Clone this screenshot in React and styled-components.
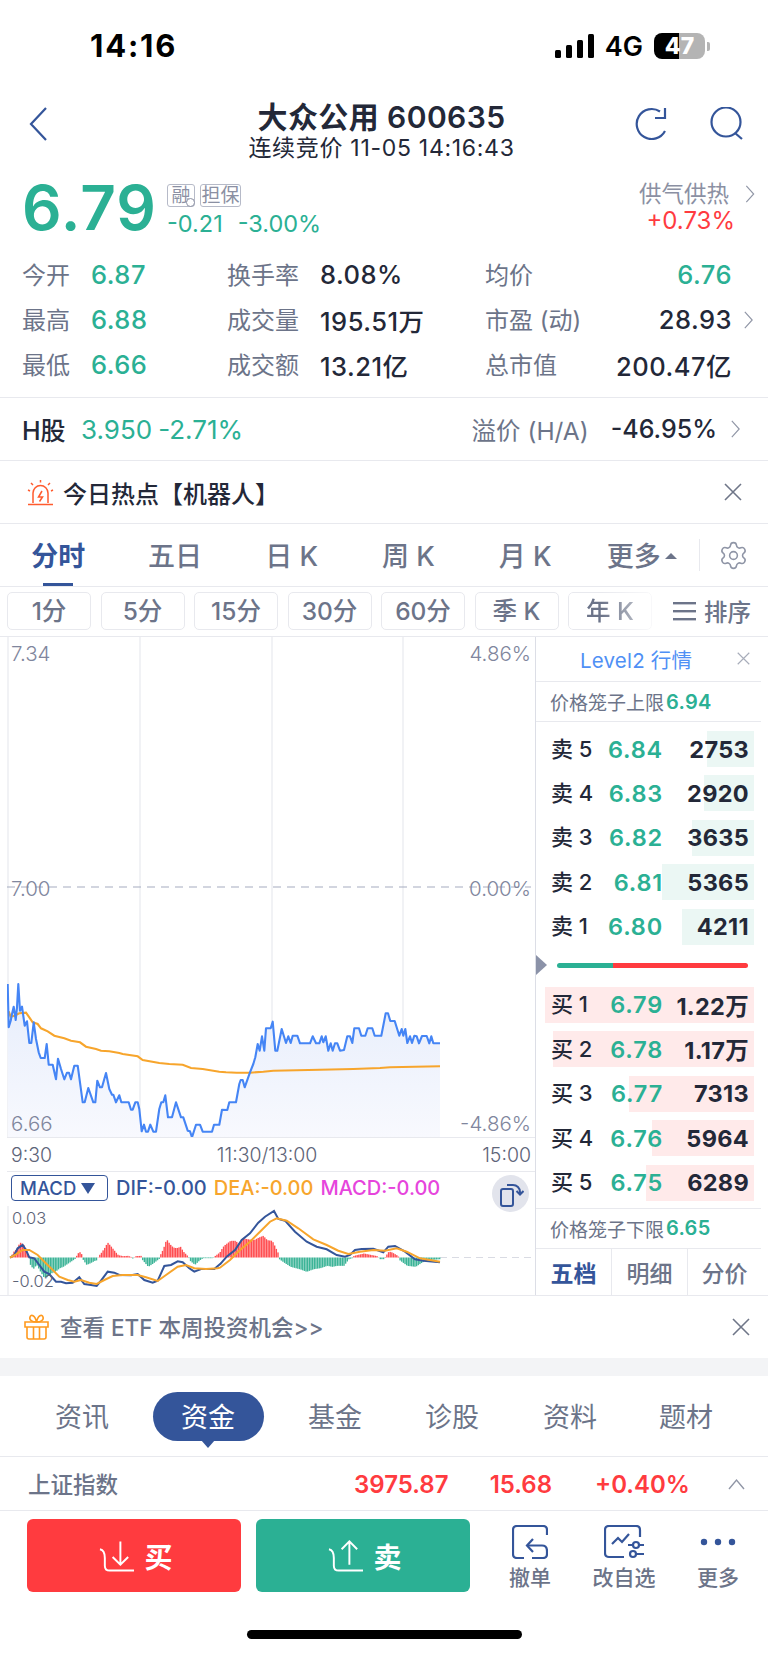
import React from 'react';
import styled, { createGlobalStyle } from 'styled-components';
import { Settings } from 'lucide-react';

const GREEN = '#2bb094';
const RED = '#ff3b3f';
const BLUE = '#34559a';
const DARK = '#232838';
const GRAY = '#6c7489';
const LINE = '#e8e9ee';

const GlobalStyle = createGlobalStyle`
  html, body {
    margin: 0;
    padding: 0;
    background: #fff;
    font-family: Inter, "Noto Sans CJK SC", sans-serif;
  }
  * { box-sizing: border-box; }
`;

// price line, in zoom pixels of the two crops
const left = ([x, y]) => [6 + x / 3, 975 + y / 3];
const right = ([x, y]) => [220 + x / 3, 975 + y / 3];
const macdLeft = ([x, y]) => [6 + x / 3, 1200 + y / 3];
const macdRight = ([x, y]) => [220 + x / 3, 1200 + y / 3];

const priceLine = [
  ...[[5,30],[8,160],[14,140],[18,120],[23,98],[29,138],[33,100],[37,30],[42,110],[48,98],[56,155],[63,142],[70,207],[76,207],[83,145],[90,195],[98,235],[104,252],[116,252],[122,210],[128,272],[140,272],[150,316],[156,254],[165,285],[175,316],[183,296],[189,296],[195,316],[205,275],[215,275],[230,385],[236,385],[247,342],[262,385],[268,385],[274,320],[282,340],[288,340],[300,297],[310,345],[318,362],[322,362],[330,385],[340,364],[346,385],[368,385],[375,407],[380,407],[388,385],[395,385],[400,405],[407,472],[414,452],[420,473],[426,473],[433,452],[442,473],[450,473],[460,405],[466,385],[472,385],[478,364],[486,430],[498,430],[510,385],[525,430],[532,430],[545,470],[552,472],[558,490],[570,452],[582,452],[590,473],[618,473],[624,452],[640,452],[648,407]].map(left),
  ...[[22,408],[28,385],[48,385],[58,330],[62,318],[68,318],[74,340],[90,295],[100,270],[106,250],[113,210],[119,230],[126,187],[133,230],[138,163],[152,163],[158,143],[166,230],[172,230],[185,165],[198,207],[205,187],[212,207],[218,185],[232,185],[240,208],[270,208],[278,187],[288,208],[298,208],[305,187],[310,205],[317,187],[325,230],[332,208],[338,230],[345,208],[352,208],[360,230],[372,228],[382,187],[390,187],[397,207],[403,163],[417,163],[424,185],[436,185],[443,163],[457,163],[464,185],[484,185],[497,118],[504,118],[511,141],[524,141],[538,185],[545,165],[550,185],[556,165],[562,207],[570,187],[576,207],[583,185],[590,187],[597,208],[606,186],[620,186],[628,208],[634,187],[640,208],[660,208]].map(right),
];

const avgLine = [
  ...[[8,112],[14,128],[25,125],[40,118],[60,116],[70,130],[80,145],[95,150],[105,163],[125,172],[145,185],[175,193],[195,200],[222,205],[240,218],[270,225],[285,230],[310,232],[340,237],[350,240],[395,247],[410,258],[460,267],[490,270],[530,272],[555,282],[590,285],[640,293]].map(left),
  ...[[18,295],[50,296],[90,296],[130,293],[160,290],[300,287],[400,285],[480,282],[510,280],[660,277]].map(right),
];

const difLine = [
  ...[[12,173],[25,165],[35,145],[50,135],[60,150],[70,172],[85,175],[100,195],[115,215],[130,222],[150,245],[165,245],[180,250],[200,248],[220,232],[235,252],[255,255],[272,258],[285,242],[305,215],[325,218],[340,225],[375,226],[395,222],[415,240],[440,248],[455,242],[475,198],[495,195],[515,184],[530,187],[550,205],[565,215],[585,207],[605,207],[625,207],[645,190]].map(macdLeft),
  ...[[0,193],[20,170],[45,150],[65,120],[90,100],[115,68],[135,50],[162,33],[175,57],[195,62],[225,95],[260,125],[290,140],[320,148],[350,165],[375,170],[390,165],[405,150],[425,147],[460,146],[490,157],[505,140],[525,138],[555,155],[585,178],[610,182],[660,187]].map(macdRight),
];

const deaLine = [
  ...[[12,173],[30,163],[50,150],[70,150],[95,165],[115,185],[135,205],[160,230],[185,240],[205,245],[225,240],[250,248],[272,252],[295,240],[320,228],[350,225],[395,225],[420,232],[455,243],[480,225],[515,200],[540,195],[565,205],[600,207],[635,205]].map(macdLeft),
  ...[[0,203],[30,180],[60,150],[90,125],[120,95],[150,65],[170,55],[200,62],[235,85],[280,118],[320,135],[355,152],[385,162],[420,155],[460,150],[495,152],[530,145],[560,155],[600,175],[660,185]].map(macdRight),
];

// histogram outline: [x, height], up is red and down is green
const histogram = [
  ...[[12,0],[22,18],[30,25],[40,45],[50,40],[58,25],[66,5],[68,-5],[70,-20],[80,-35],[90,-22],[100,-40],[112,-60],[120,-60],[130,-50],[140,-45],[150,-40],[160,-32],[170,-28],[185,-18],[200,-8],[207,-3],[210,5],[218,18],[225,10],[228,1],[230,-8],[240,-22],[250,-18],[265,-10],[272,-8],[275,3],[285,15],[295,30],[303,45],[312,35],[320,25],[328,15],[335,7],[350,4],[365,5],[375,1],[380,-5],[385,4],[405,5],[408,-8],[425,-28],[440,-18],[458,-4],[460,5],[470,25],[480,55],[490,40],[500,30],[510,28],[522,32],[530,18],[540,8],[546,1],[548,-8],[565,-22],[580,-8],[590,-2],[620,-2],[626,5],[640,15]].map(([x, h]) => [6 + x / 3, h / 3]),
  ...[[0,20],[10,35],[30,50],[45,50],[55,40],[65,58],[80,55],[100,52],[115,60],[128,65],[140,52],[155,50],[165,30],[172,15],[174,1],[176,-5],[190,-15],[210,-28],[240,-36],[258,-43],[280,-35],[300,-32],[320,-25],[335,-28],[350,-25],[370,-25],[385,-5],[395,-2],[400,5],[430,12],[450,8],[470,4],[473,1],[476,-5],[490,-5],[495,4],[505,18],[515,15],[530,6],[535,1],[537,-8],[560,-25],[585,-28],[605,-15],[620,-8],[660,-5]].map(([x, h]) => [220 + x / 3, h / 3]),
];

function toPoints (line) {
  return line.map(([x, y]) => `${x.toFixed(1)},${y.toFixed(1)}`).join(' ');
}

function histogramBars () {
  const bars = [];
  let i = 0;
  for (let x = 10; x < 440; x += 1.65) {
    while (i < histogram.length - 2 && histogram[i + 1][0] < x) i++;
    const [x0, h0] = histogram[i];
    const [x1, h1] = histogram[i + 1];
    const h = h0 + (h1 - h0) * Math.min(1, Math.max(0, (x - x0) / (x1 - x0 || 1)));
    bars.push({ x, h });
  }
  return bars;
}

const quotes = [
  [['今开', '6.87', true], ['换手率', '8.08%'], ['均价', '6.76', true]],
  [['最高', '6.88', true], ['成交量', '195.51万'], ['市盈 (动)', '28.93']],
  [['最低', '6.66', true], ['成交额', '13.21亿'], ['总市值', '200.47亿']],
];

const asks = [
  ['卖 5', '6.84', '2753', 47],
  ['卖 4', '6.83', '2920', 50],
  ['卖 3', '6.82', '3635', 62],
  ['卖 2', '6.81', '5365', 92],
  ['卖 1', '6.80', '4211', 72],
];

const bids = [
  ['买 1', '6.79', '1.22万', 209],
  ['买 2', '6.78', '1.17万', 201],
  ['买 3', '6.77', '7313', 125],
  ['买 4', '6.76', '5964', 102],
  ['买 5', '6.75', '6289', 108],
];

function Chevron ({ size = 11 }) {
  return (
    <svg width={size} height={size * 2} viewBox="0 0 11 22" fill="none" stroke="#9096a6" strokeWidth="1.4">
      <path d="M1 1 L10 11 L1 21" />
    </svg>
  );
}

function Cross ({ size = 18, color = '#6f7688' }) {
  return (
    <svg width={size} height={size} viewBox="0 0 18 18" fill="none" stroke={color} strokeWidth="1.6">
      <path d="M1 1 L17 17 M17 1 L1 17" />
    </svg>
  );
}

function OrderRow ({ row, buy }) {
  const [name, price, qty, width] = row;
  return (
    <BookRow>
      <QtyBar $buy={buy} style={{ width }} />
      <BookName>{name}</BookName>
      <BookPrice>{price}</BookPrice>
      <BookQty>{qty}</BookQty>
    </BookRow>
  );
}

export default function App () {
  return (
    <Page>
      <GlobalStyle />

      <StatusBar>
        <Clock>14:16</Clock>
        <StatusRight>
          <svg width="39" height="24" viewBox="0 0 39 24" fill="#000">
            <rect x="0" y="16" width="6" height="8" rx="1.5" />
            <rect x="11" y="11" width="6" height="13" rx="1.5" />
            <rect x="22" y="6" width="6" height="18" rx="1.5" />
            <rect x="33" y="0" width="6" height="24" rx="1.5" />
          </svg>
          <Network>4G</Network>
          <Battery>47</Battery>
          <BatteryNub />
        </StatusRight>
      </StatusBar>

      <NavBar>
        <NavIcon $left>
          <svg width="18" height="34" viewBox="0 0 18 34" fill="none" stroke={BLUE} strokeWidth="2.2">
            <path d="M17 1 L2 17 L17 33" />
          </svg>
        </NavIcon>
        <NavTitle>
          <Title>大众公用 600635</Title>
          <SubTitle>连续竞价 11-05 14:16:43</SubTitle>
        </NavTitle>
        <NavActions>
          <svg width="33" height="33" viewBox="0 0 33 33" fill="none" stroke={BLUE} strokeWidth="2.2">
            <path d="M31 24 A15 15 0 1 1 26 4.5" />
            <path d="M31 1 V11 H21" />
          </svg>
          <svg width="33" height="33" viewBox="0 0 33 33" fill="none" stroke={BLUE} strokeWidth="2.2">
            <circle cx="16" cy="15" r="14.5" />
            <path d="M25 26 L32 32" />
          </svg>
        </NavActions>
      </NavBar>

      <PriceRow>
        <BigPrice>6.79</BigPrice>
        <PriceSide>
          <Tags>
            <Tag $w={28}>融<TagCheck /></Tag>
            <Tag $w={41}>担保</Tag>
          </Tags>
          <Change>
            <span>-0.21</span>
            <span>-3.00%</span>
          </Change>
        </PriceSide>
        <Heat>
          <HeatName>供气供热<Chevron size={10} /></HeatName>
          <HeatValue>+0.73%</HeatValue>
        </Heat>
      </PriceRow>

      <Stats>
        {quotes.map((row, r) => (
          <StatRow key={r}>
            <StatLabel>{row[0][0]}</StatLabel>
            <StatValue $green>{row[0][1]}</StatValue>
            <StatLabel>{row[1][0]}</StatLabel>
            <StatValue>{row[1][1]}</StatValue>
            <StatLabel>{row[2][0]}</StatLabel>
            <StatValue $green={row[2][2]} $end>{row[2][1]}</StatValue>
            <ChevronSlot>{r === 1 && <Chevron size={9} />}</ChevronSlot>
          </StatRow>
        ))}
      </Stats>

      <HRow>
        <HName>H股</HName>
        <HPrice>3.950</HPrice>
        <HPrice>-2.71%</HPrice>
        <Premium>溢价 (H/A)</Premium>
        <PremiumValue>-46.95%</PremiumValue>
        <Chevron size={9} />
      </HRow>

      <HotRow>
        <svg width="27" height="27" viewBox="0 0 27 27" fill="none" stroke="#ff5b2e" strokeWidth="1.5">
          <path d="M6 24 V14 A7.5 7.5 0 0 1 21 14 V24" />
          <path d="M1 25.5 H26" />
          <path d="M13.5 1 V3.5 M4 4 L6 6 M23 4 L21 6 M1 11 L3 12 M26 11 L24 12" />
          <path d="M15 12 L11.5 18 H15.5 L12.5 22.5" />
        </svg>
        <HotText>今日热点【机器人】</HotText>
        <Cross />
      </HotRow>

      <Tabs>
        <Tab $active>分时<TabMark /></Tab>
        <Tab>五日</Tab>
        <Tab>日 K</Tab>
        <Tab>周 K</Tab>
        <Tab>月 K</Tab>
        <Tab>更多<MoreCaret /></Tab>
        <TabGear>
          <Settings size={31} strokeWidth={1.2} color="#8f95a6" />
        </TabGear>
      </Tabs>

      <Periods>
        {['1分', '5分', '15分', '30分', '60分', '季 K'].map(p => <Period key={p}>{p}</Period>)}
        <Period $faded>年 K</Period>
        <Sort>
          <svg width="23" height="20" viewBox="0 0 23 20" fill={GRAY}>
            <rect y="1" width="23" height="2.4" />
            <rect y="9" width="23" height="2.4" />
            <rect y="17" width="23" height="2.4" />
          </svg>
          排序
        </Sort>
      </Periods>

      <Market>
        <ChartColumn>
          <PriceChart>
            <svg width="528" height="500" viewBox="7 638 528 500">
              <defs>
                <linearGradient id="area" x1="0" y1="0" x2="0" y2="1">
                  <stop offset="0" stopColor="#e6edfb" />
                  <stop offset="1" stopColor="#f8f9fe" />
                </linearGradient>
              </defs>
              <path d="M8 638 V1138 M140 638 V1138 M272 638 V1138 M403 638 V1138" stroke={LINE} strokeWidth="1.2" />
              <polygon points={`8,1138 ${toPoints(priceLine)} 440,1138`} fill="url(#area)" />
              <path d="M7 888 H531" stroke="#a6abc0" strokeWidth="1.2" strokeDasharray="8 6" />
              <polyline points={toPoints(avgLine)} fill="none" stroke="#f7a52c" strokeWidth="2.1" />
              <polyline points={toPoints(priceLine)} fill="none" stroke="#4585f5" strokeWidth="2.1" strokeLinejoin="round" />
            </svg>
            <AxisLabel $top={5}>7.34</AxisLabel>
            <AxisLabel $top={240}>7.00</AxisLabel>
            <AxisLabel $top={475}>6.66</AxisLabel>
            <AxisLabel $top={5} $right>4.86%</AxisLabel>
            <AxisLabel $top={240} $right>0.00%</AxisLabel>
            <AxisLabel $top={475} $right>-4.86%</AxisLabel>
          </PriceChart>

          <TimeAxis>
            <span>9:30</span>
            <span>11:30/13:00</span>
            <span>15:00</span>
          </TimeAxis>

          <MacdBar>
            <MacdSelect>MACD<MacdCaret /></MacdSelect>
            <MacdValue $color={BLUE}>DIF:-0.00</MacdValue>
            <MacdValue $color="#f7a52c">DEA:-0.00</MacdValue>
            <MacdValue $color="#e645dc">MACD:-0.00</MacdValue>
            <RotateButton>
              <svg width="26" height="26" viewBox="0 0 26 26" fill="none" stroke={BLUE} strokeWidth="2">
                <rect x="3" y="8" width="12" height="17" rx="2" />
                <path d="M9 4 H15 A7 7 0 0 1 22 11 V13" />
                <path d="M18.5 10 L22 13.5 L25.5 10" />
              </svg>
            </RotateButton>
          </MacdBar>

          <MacdChart>
            <svg width="528" height="89" viewBox="7 1206 528 89">
              <path d="M8 1206 V1295" stroke={LINE} strokeWidth="1.2" />
              <path d="M440 1257.5 H531" stroke="#d9dbe3" strokeWidth="1" strokeDasharray="7 5" />
              {histogramBars().map(({ x, h }) => (
                <rect
                  key={x}
                  x={x}
                  y={h > 0 ? 1257.5 - h : 1257.5}
                  width="1.4"
                  height={Math.abs(h)}
                  fill={h > 0 ? '#ff4d50' : '#3cb497'}
                />
              ))}
              <polyline points={toPoints(difLine)} fill="none" stroke={BLUE} strokeWidth="2" />
              <polyline points={toPoints(deaLine)} fill="none" stroke="#f7a52c" strokeWidth="2" />
            </svg>
            <MacdAxis $top={1}>0.03</MacdAxis>
            <MacdAxis $top={64}>-0.02</MacdAxis>
          </MacdChart>
        </ChartColumn>

        <Book>
          <BookHeader>
            <Level2>Level2 行情</Level2>
            <BookClose><Cross size={13} color="#a8adba" /></BookClose>
          </BookHeader>
          <Cage>价格笼子上限<CagePrice>6.94</CagePrice></Cage>
          <BookRows $top={9}>
            {asks.map(row => <OrderRow key={row[0]} row={row} />)}
          </BookRows>
          <Ratio>
            <RatioMark />
            <RatioTrack />
          </Ratio>
          <BookRows $top={0}>
            {bids.map(row => <OrderRow key={row[0]} row={row} buy />)}
          </BookRows>
          <Cage $lower>价格笼子下限<CagePrice>6.65</CagePrice></Cage>
          <BookTabs>
            <BookTab $active>五档</BookTab>
            <BookTab>明细</BookTab>
            <BookTab>分价</BookTab>
          </BookTabs>
        </Book>
      </Market>

      <Banner>
        <svg width="25" height="26" viewBox="0 0 25 26" fill="none" stroke="#ff9a1f" strokeWidth="1.6">
          <path d="M1 8 H24 V13 H1 Z" />
          <path d="M3 13 V23 Q3 25 5 25 H20 Q22 25 22 23 V13" />
          <path d="M9.5 13 V25 M15.5 13 V25" />
          <path d="M12.5 8 C8 8 5 6 6 3 C7 0 11 1 12.5 8 C14 1 18 0 19 3 C20 6 17 8 12.5 8" />
        </svg>
        <BannerText>查看 ETF 本周投资机会&gt;&gt;</BannerText>
        <Cross />
      </Banner>

      <Band />

      <InfoTabs>
        <InfoTab>资讯</InfoTab>
        <InfoTab $active>资金</InfoTab>
        <InfoTab>基金</InfoTab>
        <InfoTab>诊股</InfoTab>
        <InfoTab>资料</InfoTab>
        <InfoTab>题材</InfoTab>
      </InfoTabs>

      <IndexRow>
        <IndexName>上证指数</IndexName>
        <IndexValue $w={94}>3975.87</IndexValue>
        <IndexValue $w={63} $gap={41}>15.68</IndexValue>
        <IndexValue $w={91} $gap={43}>+0.40%</IndexValue>
        <IndexCaret>
          <svg width="17" height="12" viewBox="0 0 17 12" fill="none" stroke="#9096a6" strokeWidth="1.4">
            <path d="M1 11 L8.5 2 L16 11" />
          </svg>
        </IndexCaret>
      </IndexRow>

      <Actions>
        <TradeButton $color={RED}>
          <svg width="35" height="32" viewBox="0 0 36 32" fill="none" stroke="#fff" strokeWidth="2">
            <path d="M1 9 Q6 10 6 18 V26 Q6 31 11 31 H36" />
            <path d="M22 1 V25 M14 17 L22 25 L30 17" />
          </svg>
          买
        </TradeButton>
        <TradeButton $color={GREEN}>
          <svg width="35" height="32" viewBox="0 0 36 32" fill="none" stroke="#fff" strokeWidth="2">
            <path d="M1 9 Q6 10 6 18 V26 Q6 31 11 31 H36" />
            <path d="M22 25 V1 M14 9 L22 1 L30 9" />
          </svg>
          卖
        </TradeButton>
        <ToolList>
          <Tool $w={60}>
            <svg width="36" height="34" viewBox="0 0 36 34" fill="none" stroke={BLUE} strokeWidth="2.2">
              <path d="M12 33 H5 Q1 33 1 29 V5 Q1 1 5 1 H31 Q35 1 35 5 V10" />
              <path d="M21 14 L15 20.5 L21 27" />
              <path d="M15 20.5 H30 Q35 20.5 35 26 V29 Q35 33 31 33 H20" />
            </svg>
            撤单
          </Tool>
          <Tool $w={88}>
            <svg width="40" height="34" viewBox="0 0 40 34" fill="none" stroke={BLUE} strokeWidth="2.2">
              <path d="M20 32 H5 Q1 32 1 28 V5 Q1 1 5 1 H32 Q36 1 36 5 V12" />
              <path d="M8 19 L14 13 L18 17 L25 9" />
              <path d="M24 20 H40 M27 29 H40" />
              <circle cx="32" cy="20" r="3" fill="#fff" />
              <circle cx="29" cy="29" r="3" fill="#fff" />
            </svg>
            改自选
          </Tool>
          <Tool $w={70}>
            <ToolDots>
              <svg width="36" height="8" viewBox="0 0 36 8" fill={BLUE}>
                <circle cx="4" cy="4" r="3.2" />
                <circle cx="18" cy="4" r="3.2" />
                <circle cx="32" cy="4" r="3.2" />
              </svg>
            </ToolDots>
            更多
          </Tool>
        </ToolList>
      </Actions>

      <HomeBar />
    </Page>
  );
}

const Page = styled.div`
  width: 768px;
  height: 1662px;
  overflow: hidden;
  background: #fff;
  color: ${DARK};
  display: flex;
  flex-direction: column;
`;

const StatusBar = styled.div`
  height: 92px;
  padding: 24px 63px 0 90px;
  display: flex;
  justify-content: space-between;
  align-items: flex-start;
`;

const Clock = styled.div`
  font-size: 31px;
  font-weight: 700;
  line-height: 44px;
  letter-spacing: 1.8px;
  color: #000;
`;

const StatusRight = styled.div`
  display: flex;
  align-items: center;
  height: 44px;

  svg { margin-right: 11px; }
`;

const Network = styled.div`
  font-size: 27px;
  font-weight: 600;
  color: #000;
  margin-right: 11px;
`;

const Battery = styled.div`
  width: 51px;
  height: 26px;
  border-radius: 8px;
  background: linear-gradient(90deg, #000 49%, #b4b4b4 49%);
  color: #fff;
  font-size: 23px;
  font-weight: 800;
  line-height: 26px;
  text-align: center;
`;

const BatteryNub = styled.div`
  width: 3px;
  height: 9px;
  margin-left: 2px;
  margin-right: -5px;
  border-radius: 0 2px 2px 0;
  background: #b4b4b4;
`;

const NavBar = styled.div`
  height: 73px;
  padding: 13px 25px 0 29px;
  display: flex;
  align-items: flex-start;
  position: relative;
`;

const NavIcon = styled.div`
  height: 34px;
  margin-top: 2px;
`;

const NavTitle = styled.div`
  position: absolute;
  left: 0;
  right: 0;
  top: 8px;
  padding-right: 5px;
  text-align: center;
`;

const Title = styled.div`
  font-size: 30px;
  font-weight: 600;
  line-height: 35px;
  letter-spacing: 0.4px;
`;

const SubTitle = styled.div`
  font-size: 23px;
  line-height: 29px;
  margin-top: -1px;
  letter-spacing: 0.7px;
`;

const NavActions = styled.div`
  margin-left: auto;
  display: flex;
  gap: 43px;
  padding-top: 2px;
`;

const PriceRow = styled.div`
  height: 85px;
  padding: 15px 13px 0 22px;
  display: flex;
  align-items: flex-start;
`;

const BigPrice = styled.div`
  font-size: 62px;
  font-weight: 600;
  line-height: 56px;
  color: ${GREEN};
  width: 145px;
  letter-spacing: 1px;
`;

const PriceSide = styled.div`
  padding-top: 4px;
`;

const Tags = styled.div`
  display: flex;
  gap: 5px;
`;

const Tag = styled.div`
  position: relative;
  width: ${p => p.$w}px;
  height: 23px;
  border: 1px solid #b6bac8;
  border-radius: 3px;
  color: #8b90a3;
  font-size: 19px;
  line-height: 21px;
  text-align: center;
  white-space: nowrap;
`;

const TagCheck = styled.span`
  position: absolute;
  right: -1px;
  bottom: -1px;
  width: 9px;
  height: 9px;
  border-radius: 50%;
  border: 1px solid #8b90a3;
  background: #fff;
`;

const Change = styled.div`
  display: flex;
  gap: 15px;
  margin-top: 3px;
  font-size: 23.5px;
  line-height: 28px;
  color: ${GREEN};
`;

const Heat = styled.div`
  margin-left: auto;
  text-align: right;
`;

const HeatName = styled.div`
  display: flex;
  align-items: center;
  justify-content: flex-end;
  gap: 16px;
  font-size: 22.5px;
  line-height: 28px;
  color: #8b90a3;

  svg { height: 18px; }
`;

const HeatValue = styled.div`
  font-size: 24px;
  line-height: 28px;
  margin: -1px 20px 0 0;
  color: ${RED};
`;

const Stats = styled.div`
  height: 148px;
  padding: 2px 13px 0 22px;
  border-bottom: 1px solid ${LINE};
`;

const StatRow = styled.div`
  height: 45px;
  display: grid;
  grid-template-columns: 69px 136px 93px 165px 92px 155px 1fr;
  align-items: center;
`;

const StatLabel = styled.div`
  font-size: 24px;
  margin-bottom: 3px;
  color: ${GRAY};
  white-space: nowrap;
`;

const StatValue = styled.div`
  font-size: 25.5px;
  font-weight: 500;
  letter-spacing: 0.5px;
  color: ${p => (p.$green ? GREEN : DARK)};
  text-align: ${p => (p.$end ? 'right' : 'left')};
  white-space: nowrap;
`;

const ChevronSlot = styled.div`
  padding-left: 12px;
  display: flex;

  svg { height: 18px; }
`;

const HRow = styled.div`
  height: 63px;
  padding: 0 28px 0 22px;
  display: flex;
  align-items: center;
  border-bottom: 1px solid ${LINE};

  svg { height: 20px; margin-left: 14px; }
`;

const HName = styled.div`
  font-size: 25px;
  font-weight: 500;
  width: 59px;
`;

const HPrice = styled.div`
  font-size: 26px;
  margin-right: 6px;
  color: ${GREEN};
`;

const Premium = styled.div`
  margin-left: auto;
  font-size: 24.5px;
  color: ${GRAY};
`;

const PremiumValue = styled.div`
  margin-left: 22px;
  font-size: 25px;
  font-weight: 500;
`;

const HotRow = styled.div`
  height: 63px;
  padding: 0 26px 0 27px;
  display: flex;
  align-items: center;
  border-bottom: 1px solid ${LINE};
`;

const HotText = styled.div`
  flex: 1;
  margin-left: 9px;
  font-size: 24px;
  font-weight: 500;
`;

const Tabs = styled.div`
  height: 63px;
  display: grid;
  grid-template-columns: repeat(6, 116.7px) 1fr;
  align-items: center;
  border-bottom: 1px solid ${LINE};
`;

const Tab = styled.div`
  position: relative;
  height: 62px;
  line-height: 66px;
  text-align: center;
  font-size: 27px;
  font-weight: ${p => (p.$active ? 600 : 500)};
  color: ${p => (p.$active ? BLUE : GRAY)};
`;

const TabMark = styled.span`
  position: absolute;
  left: 43px;
  bottom: 0;
  width: 30px;
  height: 3px;
  background: ${BLUE};
`;

const MoreCaret = styled.span`
  display: inline-block;
  width: 0;
  height: 0;
  margin: 0 0 7px 4px;
  border-left: 6px solid transparent;
  border-right: 6px solid transparent;
  border-bottom: 6px solid ${GRAY};
`;

const TabGear = styled.div`
  display: flex;
  align-items: center;
  height: 32px;
  padding-left: 18px;
  border-left: 1px solid ${LINE};
  margin-left: -1px;
`;

const Periods = styled.div`
  height: 50px;
  padding: 5px 17px 0 7px;
  display: flex;
  gap: 9.5px;
  align-items: flex-start;
  border-bottom: 1px solid ${LINE};
`;

const Period = styled.div`
  width: 84px;
  height: 38px;
  border: 1px solid ${LINE};
  border-radius: 5px;
  font-size: 24.5px;
  font-weight: 500;
  line-height: 36px;
  text-align: center;
  color: ${GRAY};
  ${p => p.$faded && `
    mask-image: linear-gradient(90deg, #000 40%, rgba(0, 0, 0, .3));
  `}
`;

const Sort = styled.div`
  margin-left: auto;
  height: 38px;
  display: flex;
  align-items: center;
  gap: 8px;
  font-size: 23.5px;
  font-weight: 500;
  color: ${GRAY};
`;

const Market = styled.div`
  height: 659px;
  display: flex;
  border-bottom: 1px solid ${LINE};
`;

const ChartColumn = styled.div`
  width: 536px;
  padding-left: 7px;
  border-right: 1px solid #dcdee6;
`;

const PriceChart = styled.div`
  position: relative;
  height: 501px;
  border-bottom: 1px solid ${LINE};

  svg { display: block; }
`;

const AxisLabel = styled.div`
  position: absolute;
  top: ${p => p.$top}px;
  ${p => (p.$right ? 'right: 4px;' : 'left: 4px;')}
  font-size: 20.5px;
  line-height: 24px;
  font-weight: 300;
  color: #80869d;
`;

const TimeAxis = styled.div`
  height: 33px;
  padding: 0 4px 0 4px;
  display: flex;
  justify-content: space-between;
  align-items: center;
  font-size: 19.5px;
  font-weight: 300;
  color: #5d6478;
`;

const MacdBar = styled.div`
  position: relative;
  height: 35px;
  padding: 3px 0 0 4px;
  display: flex;
  align-items: flex-start;
  gap: 8px;
  border-top: 1px solid ${LINE};
`;

const MacdSelect = styled.div`
  width: 97px;
  height: 26px;
  padding-left: 8px;
  border: 1px solid ${BLUE};
  border-radius: 4px;
  display: flex;
  align-items: center;
  font-size: 18.5px;
  font-weight: 500;
  color: ${BLUE};
`;

const MacdCaret = styled.span`
  width: 0;
  height: 0;
  margin-left: 5px;
  border-left: 7px solid transparent;
  border-right: 7px solid transparent;
  border-top: 11px solid ${BLUE};
`;

const MacdValue = styled.div`
  font-size: 20px;
  font-weight: 500;
  line-height: 26px;
  margin-right: -1px;
  color: ${p => p.$color};
  white-space: nowrap;
`;

const RotateButton = styled.div`
  position: absolute;
  right: 6px;
  top: 3px;
  width: 37px;
  height: 37px;
  border-radius: 50%;
  background: #e2e4ec;
  display: flex;
  align-items: center;
  justify-content: center;
  z-index: 1;
`;

const MacdChart = styled.div`
  position: relative;
  height: 89px;

  svg { display: block; }
`;

const MacdAxis = styled.div`
  position: absolute;
  left: 5px;
  top: ${p => p.$top}px;
  font-size: 16.5px;
  line-height: 22px;
  font-weight: 300;
  color: #5d6478;
`;

const Book = styled.div`
  flex: 1;
  display: flex;
  flex-direction: column;
`;

const BookHeader = styled.div`
  position: relative;
  height: 45px;
  margin-right: 7px;
  padding-left: 44px;
  display: flex;
  align-items: center;
  border-bottom: 1px solid ${LINE};
`;

const Level2 = styled.div`
  font-size: 20.5px;
  letter-spacing: 0.2px;
  color: #4f90f5;
`;

const BookClose = styled.div`
  position: absolute;
  right: 11px;
  top: 15px;
  display: flex;
`;

const Cage = styled.div`
  height: 40px;
  margin-right: 7px;
  padding-left: 14px;
  display: flex;
  align-items: center;
  font-size: 19px;
  color: ${GRAY};
  border-bottom: 1px solid ${LINE};
  ${p => p.$lower && `
    height: 41px;
    margin-top: 7px;
    border-top: 1px solid ${LINE};
  `}
`;

const CagePrice = styled.span`
  margin-left: 2px;
  font-size: 20px;
  font-weight: 600;
  letter-spacing: 0.3px;
  color: ${GREEN};
`;

const BookRows = styled.div`
  padding-top: ${p => p.$top}px;
  display: flex;
  flex-direction: column;
  gap: 8.4px;
`;

const BookRow = styled.div`
  position: relative;
  height: 36px;
  width: 218px;
  display: flex;
  align-items: center;
  font-size: 23.5px;
`;

const QtyBar = styled.div`
  position: absolute;
  top: 0;
  bottom: 0;
  right: 0;
  background: ${p => (p.$buy ? '#ffeaea' : '#ebf7f4')};
`;

const BookName = styled.div`
  position: relative;
  width: 62px;
  padding-left: 15px;
  margin-bottom: 5px;
  font-size: 22px;
  font-weight: 500;
  white-space: nowrap;
`;

const BookPrice = styled.div`
  position: relative;
  width: 65px;
  text-align: right;
  font-weight: 600;
  letter-spacing: 0.8px;
  color: ${GREEN};
`;

const BookQty = styled.div`
  position: relative;
  width: 86px;
  text-align: right;
  font-weight: 700;
  letter-spacing: 0.3px;
`;

const Ratio = styled.div`
  position: relative;
  height: 42.4px;
  padding: 18px 20px 0 21px;
`;

const RatioMark = styled.div`
  position: absolute;
  left: 0;
  top: 10px;
  width: 0;
  height: 0;
  border-top: 10px solid transparent;
  border-bottom: 10px solid transparent;
  border-left: 11px solid #8b92a8;
`;

const RatioTrack = styled.div`
  height: 5px;
  border-radius: 3px;
  background: linear-gradient(90deg, ${GREEN} 29.5%, ${RED} 29.5%);
`;

const BookTabs = styled.div`
  flex: 1;
  margin-right: 7px;
  display: grid;
  grid-template-columns: 75px 76px 1fr;
`;

const BookTab = styled.div`
  display: flex;
  align-items: center;
  justify-content: center;
  font-size: 23px;
  font-weight: ${p => (p.$active ? 600 : 500)};
  color: ${p => (p.$active ? BLUE : GRAY)};
  border-left: ${p => (p.$active ? '0' : `1px solid ${LINE}`)};
`;

const Banner = styled.div`
  height: 62px;
  padding: 0 18px 0 24px;
  display: flex;
  align-items: center;
`;

const BannerText = styled.div`
  flex: 1;
  margin: 0 0 2px 11px;
  font-size: 22.5px;
  font-weight: 500;
  color: ${GRAY};
`;

const Band = styled.div`
  height: 18px;
  background: #f3f4f6;
`;

const InfoTabs = styled.div`
  height: 81px;
  padding: 16px 0 0 22px;
  display: grid;
  grid-template-columns: 120px 132px 122px 112px 124px 108px;
  justify-items: center;
  align-items: start;
  border-bottom: 1px solid ${LINE};
`;

const InfoTab = styled.div`
  position: relative;
  width: 111px;
  height: 49px;
  border-radius: 25px;
  font-size: 27px;
  line-height: 51px;
  text-align: center;
  color: ${p => (p.$active ? '#fff' : GRAY)};
  background: ${p => (p.$active ? BLUE : 'transparent')};
  ${p => p.$active && `
    &::after {
      content: '';
      position: absolute;
      left: 48px;
      bottom: -7px;
      border-left: 7.5px solid transparent;
      border-right: 7.5px solid transparent;
      border-top: 8px solid ${BLUE};
    }
  `}
`;

const IndexRow = styled.div`
  height: 54px;
  padding: 0 23px 0 28px;
  display: flex;
  align-items: center;
  border-bottom: 1px solid ${LINE};
`;

const IndexName = styled.div`
  flex: 1;
  margin-bottom: 2px;
  font-size: 22.5px;
  font-weight: 500;
  color: ${GRAY};
`;

const IndexValue = styled.div`
  width: ${p => p.$w}px;
  margin-left: ${p => p.$gap || 0}px;
  margin-top: 2px;
  font-size: 24px;
  font-weight: 600;
  text-align: right;
  white-space: nowrap;
  color: ${RED};
`;

const IndexCaret = styled.div`
  width: 59px;
  display: flex;
  justify-content: flex-end;
`;

const Actions = styled.div`
  height: 118px;
  padding: 8px 0 0 27px;
  display: flex;
  gap: 15px;
  align-items: flex-start;
`;

const TradeButton = styled.div`
  width: 214px;
  height: 73px;
  padding-left: 4px;
  border-radius: 6px;
  background: ${p => p.$color};
  display: flex;
  align-items: center;
  justify-content: center;
  gap: 10px;
  color: #fff;
  font-size: 28px;
  font-weight: 600;
`;

const ToolList = styled.div`
  margin-left: 15px;
  display: flex;
`;

const Tool = styled.div`
  width: ${p => p.$w}px;
  margin-right: 15px;
  display: flex;
  flex-direction: column;
  align-items: center;
  gap: 5px;
  padding-top: 6px;
  font-size: 21px;
  line-height: 27px;
  color: ${GRAY};
  font-weight: 500;
  white-space: nowrap;

  &:first-child { margin-right: 20px; }
  &:last-child { margin: 0; }
`;

const ToolDots = styled.div`
  height: 34px;
  display: flex;
  align-items: center;
`;

const HomeBar = styled.div`
  width: 275px;
  height: 9px;
  margin: 1px auto 0;
  border-radius: 5px;
  background: #000;
`;
